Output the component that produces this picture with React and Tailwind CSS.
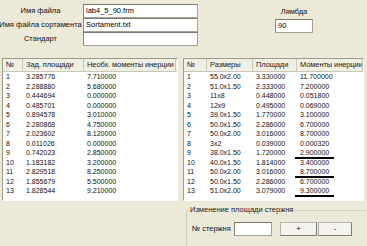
const leftRows = [
  ["1", "3.285776", "7.710000"],
  ["2", "2.288880", "5.680000"],
  ["3", "0.444694", "0.000000"],
  ["4", "0.485701", "0.000000"],
  ["5", "0.894578", "3.010000"],
  ["6", "2.280868", "4.750000"],
  ["7", "2.023602", "8.120000"],
  ["8", "0.011026", "0.000000"],
  ["9", "0.742023", "2.850000"],
  ["10", "1.183182", "3.200000"],
  ["11", "2.829518", "8.250000"],
  ["12", "1.855679", "5.500000"],
  ["13", "1.828544", "9.210000"],
];

const rightRows = [
  ["1", "55.0x2.00", "3.330000", "11.700000"],
  ["2", "51.0x1.50", "2.333000", "7.200000"],
  ["3", "11x8", "0.448000", "0.051800"],
  ["4", "12x9", "0.495000", "0.069000"],
  ["5", "39.0x1.50", "1.770000", "3.100000"],
  ["6", "50.0x1.50", "2.286000", "6.700000"],
  ["7", "50.0x2.00", "3.016000", "8.700000"],
  ["8", "3x2", "0.039000", "0.000320"],
  ["9", "38.0x1.50", "1.720000", "2.900000"],
  ["10", "40.0x1.50", "1.814000", "3.400000"],
  ["11", "50.0x2.00", "3.016000", "8.700000"],
  ["12", "50.0x1.50", "2.286000", "6.700000"],
  ["13", "51.0x2.00", "3.079000", "9.300000"],
];

// rows whose last value is underlined
const marked = ["9", "11", "13"];

function Input({ value, className }) {
  return (
    <div
      className={
        "h-[14px] whitespace-nowrap border border-[#a5a597] border-t-[#7a7a6e] border-l-[#8a8a7e] bg-white pl-[2px] text-[7.5px] leading-[12px] text-black " +
        (className || "")
      }
    >
      {value}
    </div>
  );
}

function ListView({ widths, headers, rows, className }) {
  return (
    <div
      className={
        "h-[143px] overflow-hidden border border-[#9d9b8c] border-r-white border-b-white bg-white " +
        (className || "")
      }
    >
      <div className="flex h-[13px] border-b border-[#c9c7b8] bg-[#f0efe4]">
        {headers.map((h, i) => (
          <div
            key={h}
            style={{ width: widths[i] }}
            className="shrink-0 overflow-hidden whitespace-nowrap border-r border-[#c9c7b8] pl-[3px] text-[7.5px] tracking-[-0.1px] leading-[12px] text-[#222]"
          >
            {h}
          </div>
        ))}
      </div>
      {rows.map((r) => (
        <div key={r[0]} className="flex h-[9.5px] text-[7px] leading-[9.5px] text-[#111]">
          {r.map((c, i) => (
            <div key={i} style={{ width: widths[i] }} className="relative shrink-0 whitespace-nowrap pl-[3px]">
              {c}
              {i === 3 && marked.includes(r[0]) && (
                <div className="absolute bottom-[-1px] left-[-2px] h-[2px] w-[39px] bg-black" />
              )}
            </div>
          ))}
        </div>
      ))}
    </div>
  );
}

export default function App() {
  return (
    <div className="relative h-[246px] w-[367px] overflow-hidden bg-[#ECE9D8] font-['Liberation_Sans',Arial,sans-serif] text-[#111]">
      <div className="flex h-[58px] pt-[4px]">
        <div className="flex w-[83px] flex-col whitespace-nowrap pr-[2px] text-[7.5px]">
          <div className="flex h-[14px] items-center justify-center">Имя файла</div>
          <div className="flex h-[14px] items-center justify-center">Имя файла сортамента</div>
          <div className="flex h-[14px] items-center justify-center">Стандарт</div>
        </div>
        <div className="flex w-[115px] flex-col">
          <Input value="lab4_5_90.frm" />
          <Input value="Sortament.txt" />
          <Input value="" />
        </div>
        <div className="ml-[77px] flex w-[38px] flex-col items-center">
          <div className="h-[15px] whitespace-nowrap pt-[3px] text-[7.5px] leading-[10px]">Лямбда</div>
          <Input value="90" className="w-[38px]" />
        </div>
      </div>

      <div className="flex gap-[5px] pl-[2px]">
        <ListView
          className="w-[176px]"
          widths={[20, 61, 92]}
          headers={["№", "Зад. площади", "Необх. моменты инерции"]}
          rows={leftRows}
        />
        <ListView
          className="w-[181px]"
          widths={[23, 46, 44, 66]}
          headers={["№", "Размеры", "Площади", "Моменты инерции"]}
          rows={rightRows}
        />
      </div>

      <div className="relative ml-[186px] mt-[9px] h-[50px] w-[200px] rounded-[3px] border border-[#d0d0bf]">
        <div className="absolute left-[2px] top-[-6px] whitespace-nowrap bg-[#ECE9D8] px-[1px] text-[7.5px] leading-[10px] text-[#222]">
          Изменение площади стержня
        </div>
        <div className="flex items-center pt-[11px] pl-[5px]">
          <div className="w-[42px] whitespace-nowrap text-[7.5px]">№ стержня</div>
          <Input value="" className="w-[38px]" />
          <button className="ml-[8px] h-[14px] w-[37px] border border-[#b5b4ac] border-b-[#7f7e76] border-r-[#7f7e76] bg-[#f4f3ee] text-[8px] leading-[10px]">
            +
          </button>
          <button className="ml-[1px] h-[14px] w-[34px] border border-[#b5b4ac] border-b-[#7f7e76] border-r-[#7f7e76] bg-[#f4f3ee] text-[8px] leading-[10px]">
            -
          </button>
        </div>
      </div>
    </div>
  );
}
